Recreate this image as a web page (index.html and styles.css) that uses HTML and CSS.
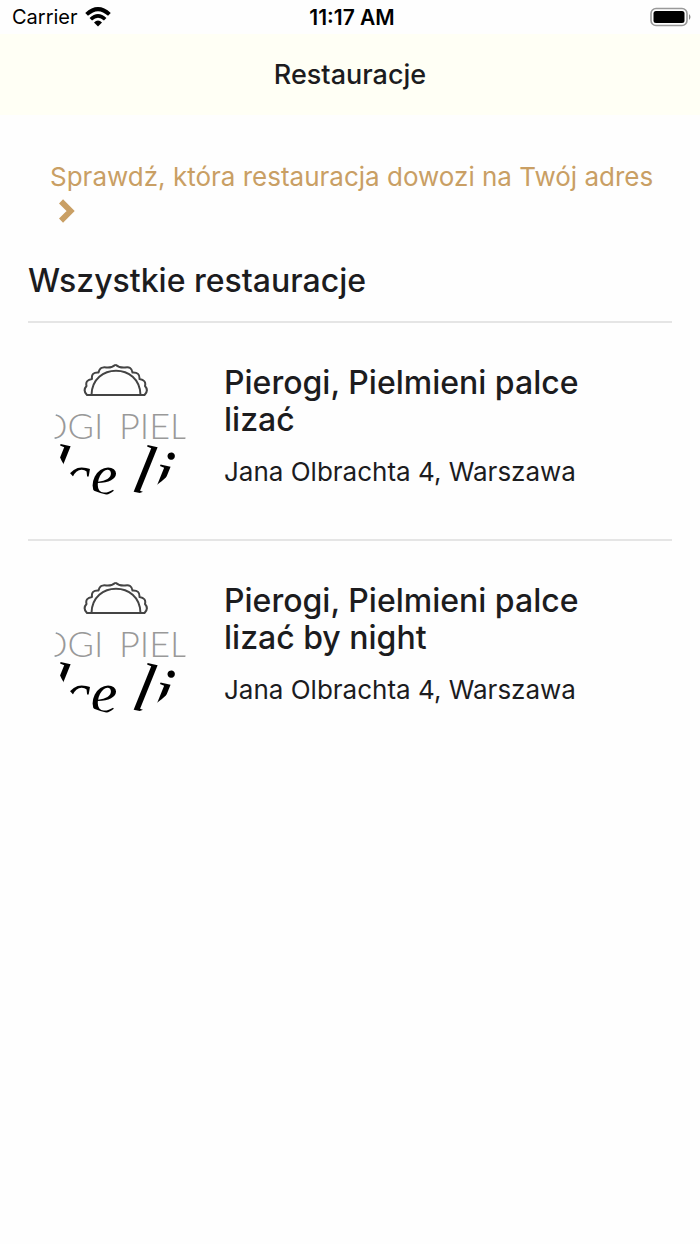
FILE: index.html
```html
<!DOCTYPE html>
<html lang="pl">
<head>
  <meta charset="UTF-8">
  <meta name="viewport" content="width=device-width, initial-scale=1.0">
  <title>Restauracje</title>
  <link rel="stylesheet" href="styles.css">
</head>
<body>
  <div class="status-bar">
    <div class="carrier">
      <span>Carrier</span>
      <svg class="wifi" viewBox="0 0 26 20" aria-hidden="true">
        <path d="M1.6 7.4 Q13 -3.2 24.4 7.4" fill="none" stroke="#000" stroke-width="4"/>
        <path d="M5.8 12.2 Q13 5.4 20.2 12.2" fill="none" stroke="#000" stroke-width="3.6"/>
        <path d="M9 15.6 Q13 11.6 17 15.6 L13 19.4 Z"/>
      </svg>
    </div>
    <div class="time">11:17 AM</div>
    <svg class="battery" viewBox="0 0 42 20" aria-hidden="true">
      <rect x="1" y="1.5" width="36" height="17" rx="5" fill="none" stroke="#999" stroke-width="1.6"/>
      <rect x="3.5" y="4" width="31" height="12" rx="2.5"/>
      <path d="M39 7 Q42 10 39 13 Z" fill="#888"/>
    </svg>
  </div>

  <header class="header">
    <h1>Restauracje</h1>
  </header>

  <main class="content">
    <a class="check-address" href="#">
      Sprawdź, która restauracja dowozi na Twój adres
      <svg class="chevron" viewBox="0 0 16 24" aria-hidden="true">
        <path d="M2 2.4 L11.6 12 L2 21.6" fill="none" stroke="currentColor" stroke-width="5.8"/>
      </svg>
    </a>

    <h2>Wszystkie restauracje</h2>

    <!-- logo shared by both restaurants -->
    <svg class="symbols" aria-hidden="true">
      <symbol id="logo" viewBox="0 0 132 132">
        <g fill="none" stroke="#444" stroke-width="2" stroke-linejoin="round">
          <path d="M33 31 Q28.5 26.5 32.5 22 Q31 16 38 15 Q37 8 44.5 8.5 Q46 2 52.5 3.5 Q58 4 61.5 0.5 Q65 4 71 3.5 Q77.5 2 78.5 8.5 Q86 8 85.5 15 Q92.5 16 91 22 Q95 26.5 90.5 31 Z"/>
          <path d="M37.5 31 C38 -1.5 86 -1.5 86.5 31"/>
        </g>
        <text class="logo-caps" x="-15" y="75">OGI</text>
        <text class="logo-caps" x="65" y="75">PIEL</text>
        <text class="logo-script tall" transform="translate(-11 126) rotate(12)">l</text>
        <text class="logo-script" x="10" y="131">ce</text>
        <text class="logo-script tall" transform="translate(76 127) rotate(12)">li</text>
      </symbol>
    </svg>

    <ul class="restaurants">
      <li class="restaurant">
        <svg class="logo" role="img" aria-label="Pierogi, Pielmieni"><use href="#logo"/></svg>
        <div class="info">
          <h3>Pierogi, Pielmieni palce lizać</h3>
          <p>Jana Olbrachta 4, Warszawa</p>
        </div>
      </li>
      <li class="restaurant">
        <svg class="logo" role="img" aria-label="Pierogi, Pielmieni"><use href="#logo"/></svg>
        <div class="info">
          <h3>Pierogi, Pielmieni palce lizać by night</h3>
          <p>Jana Olbrachta 4, Warszawa</p>
        </div>
      </li>
    </ul>
  </main>
</body>
</html>
```

FILE: styles.css
```css
* {
  box-sizing: border-box;
}
body {
  margin: 0;
  font-family: Inter, "Liberation Sans", sans-serif;
  color: #1c1c1e;
  background: #fefefe;
}
h1, h2, h3, p {
  margin: 0;
  font-weight: 500;
}
.status-bar {
  display: grid;
  grid-template-columns: 1fr auto 1fr;
  align-items: center;
  height: 34px;
  padding: 0 8px 0 12px;
  font-size: 20px;
  color: #000;
}
.carrier {
  display: flex;
  align-items: center;
  gap: 7px;
}
.wifi {
  width: 26px;
  height: 20px;
}
.time {
  font-size: 21px;
  font-weight: 600;
}
.battery {
  width: 42px;
  height: 20px;
  justify-self: end;
}
.header {
  padding: 24px;
  text-align: center;
  background: #fffff5;
}
h1 {
  font-size: 27px;
  line-height: 33px;
}
.content {
  padding: 45px 28px;
}
.check-address {
  display: block;
  padding: 0 12px 0 22px;
  font-size: 26px;
  line-height: 34px;
  color: #c99f64;
  text-decoration: none;
}
.chevron {
  width: 16px;
  height: 24px;
  margin-left: 9px;
  vertical-align: -3px;
}
h2 {
  margin: 33px 0 20px;
  font-size: 32px;
  line-height: 40px;
}
.symbols {
  position: absolute;
  width: 0;
  height: 0;
}
.restaurants {
  margin: 0;
  padding: 0;
  list-style: none;
}
.restaurant {
  display: flex;
  align-items: flex-start;
  gap: 38px;
  padding: 41px 60px 43px 26px;
  border-top: 2px solid #e5e5e5;
}
.logo {
  flex: none;
  width: 132px;
  height: 132px;
  border-radius: 50%;
}
.logo-caps {
  font-family: Lato, sans-serif;
  font-size: 36px;
  font-weight: 300;
  fill: #999;
}
.logo-script {
  font-family: "Liberation Serif", serif;
  font-size: 60px;
  font-style: italic;
  fill: #000;
}
.tall {
  font-size: 70px;
}
h3 {
  font-size: 32px;
  line-height: 37px;
}
p {
  margin-top: 18px;
  font-size: 26px;
  font-weight: 400;
  line-height: 32px;
}
```
